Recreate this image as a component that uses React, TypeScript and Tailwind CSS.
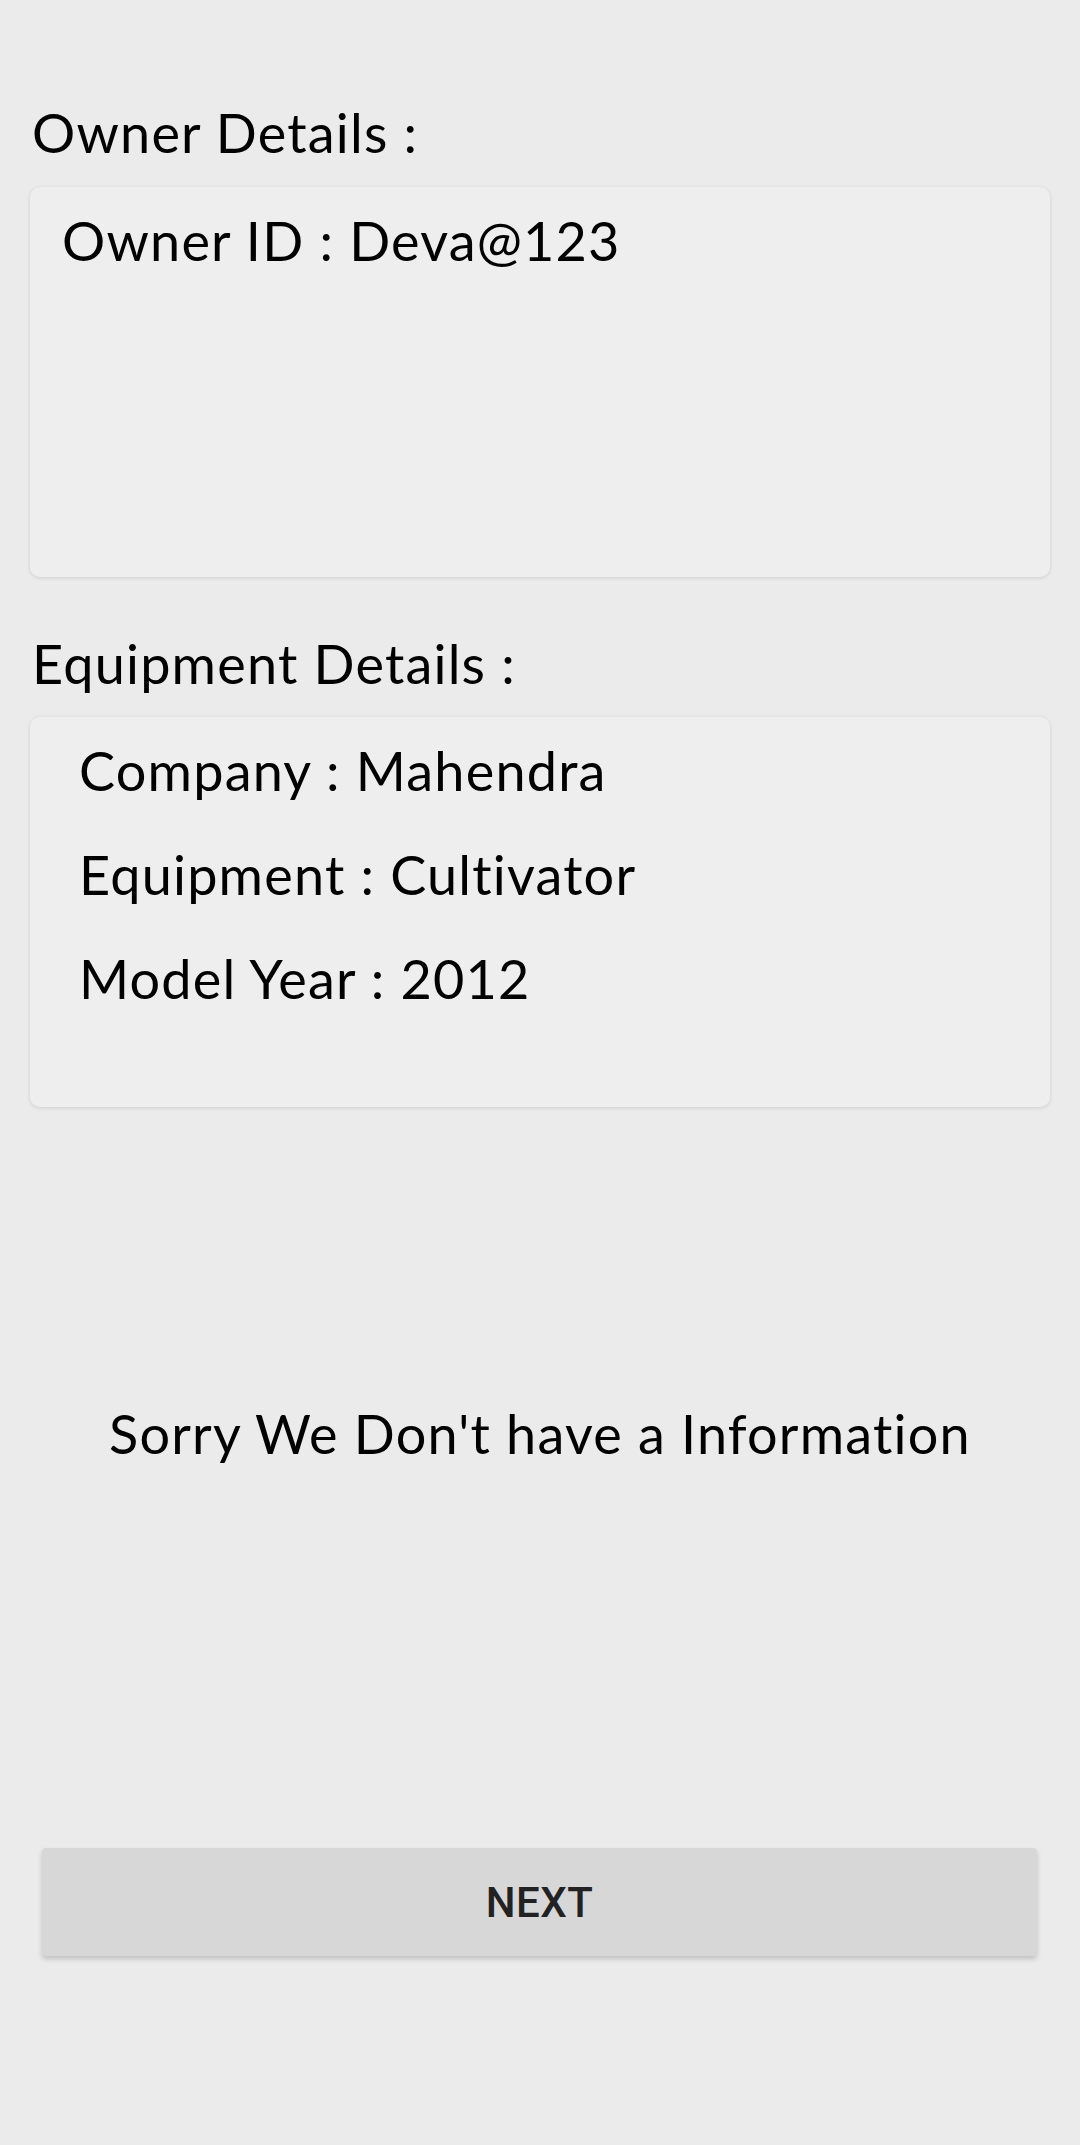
import React from "react";

export default function App() {
  const font = { fontFamily: "Lato, 'Noto Sans', sans-serif" };
  return (
    <div className="w-[1080px] h-[2145px] bg-[#ebebeb] flex flex-col text-black tracking-[1.2px]" style={font}>
      <div className="pt-[101px] px-[30px] flex flex-col">
        <h2 className="text-[54px] leading-[64px] font-normal pl-[2px]">Owner Details :</h2>
        <div className="mt-[22px] h-[390px] rounded-[10px] bg-[#eeeeee] shadow-[0_1px_4px_rgba(0,0,0,0.12)] pt-[22px] pl-[32px]">
          <p className="text-[54px] leading-[64px]">Owner ID : Deva@123</p>
        </div>
        <h2 className="mt-[55px] text-[54px] leading-[64px] font-normal pl-[2px]">Equipment Details :</h2>
        <div className="mt-[21px] h-[390px] rounded-[10px] bg-[#eeeeee] shadow-[0_1px_4px_rgba(0,0,0,0.12)] pt-[22px] pl-[49px] flex flex-col gap-[40px]">
          <p className="text-[54px] leading-[64px]">Company : Mahendra</p>
          <p className="text-[54px] leading-[64px]">Equipment : Cultivator</p>
          <p className="text-[54px] leading-[64px]">Model Year : 2012</p>
        </div>
      </div>
      <p className="mt-[295px] text-center text-[54px] leading-[64px]">Sorry We Don't have a Information</p>
      <div className="mt-[382px] pl-[42px] pr-[43px]">
        <button
          className="w-full h-[108px] rounded-[4px] bg-[#d7d7d7] shadow-[0_3px_5px_rgba(0,0,0,0.18)] text-[42px] font-medium text-[#222222] uppercase tracking-[0.5px]"
          style={{ fontFamily: "Roboto, 'Noto Sans', sans-serif" }}
        >
          NEXT
        </button>
      </div>
    </div>
  );
}
